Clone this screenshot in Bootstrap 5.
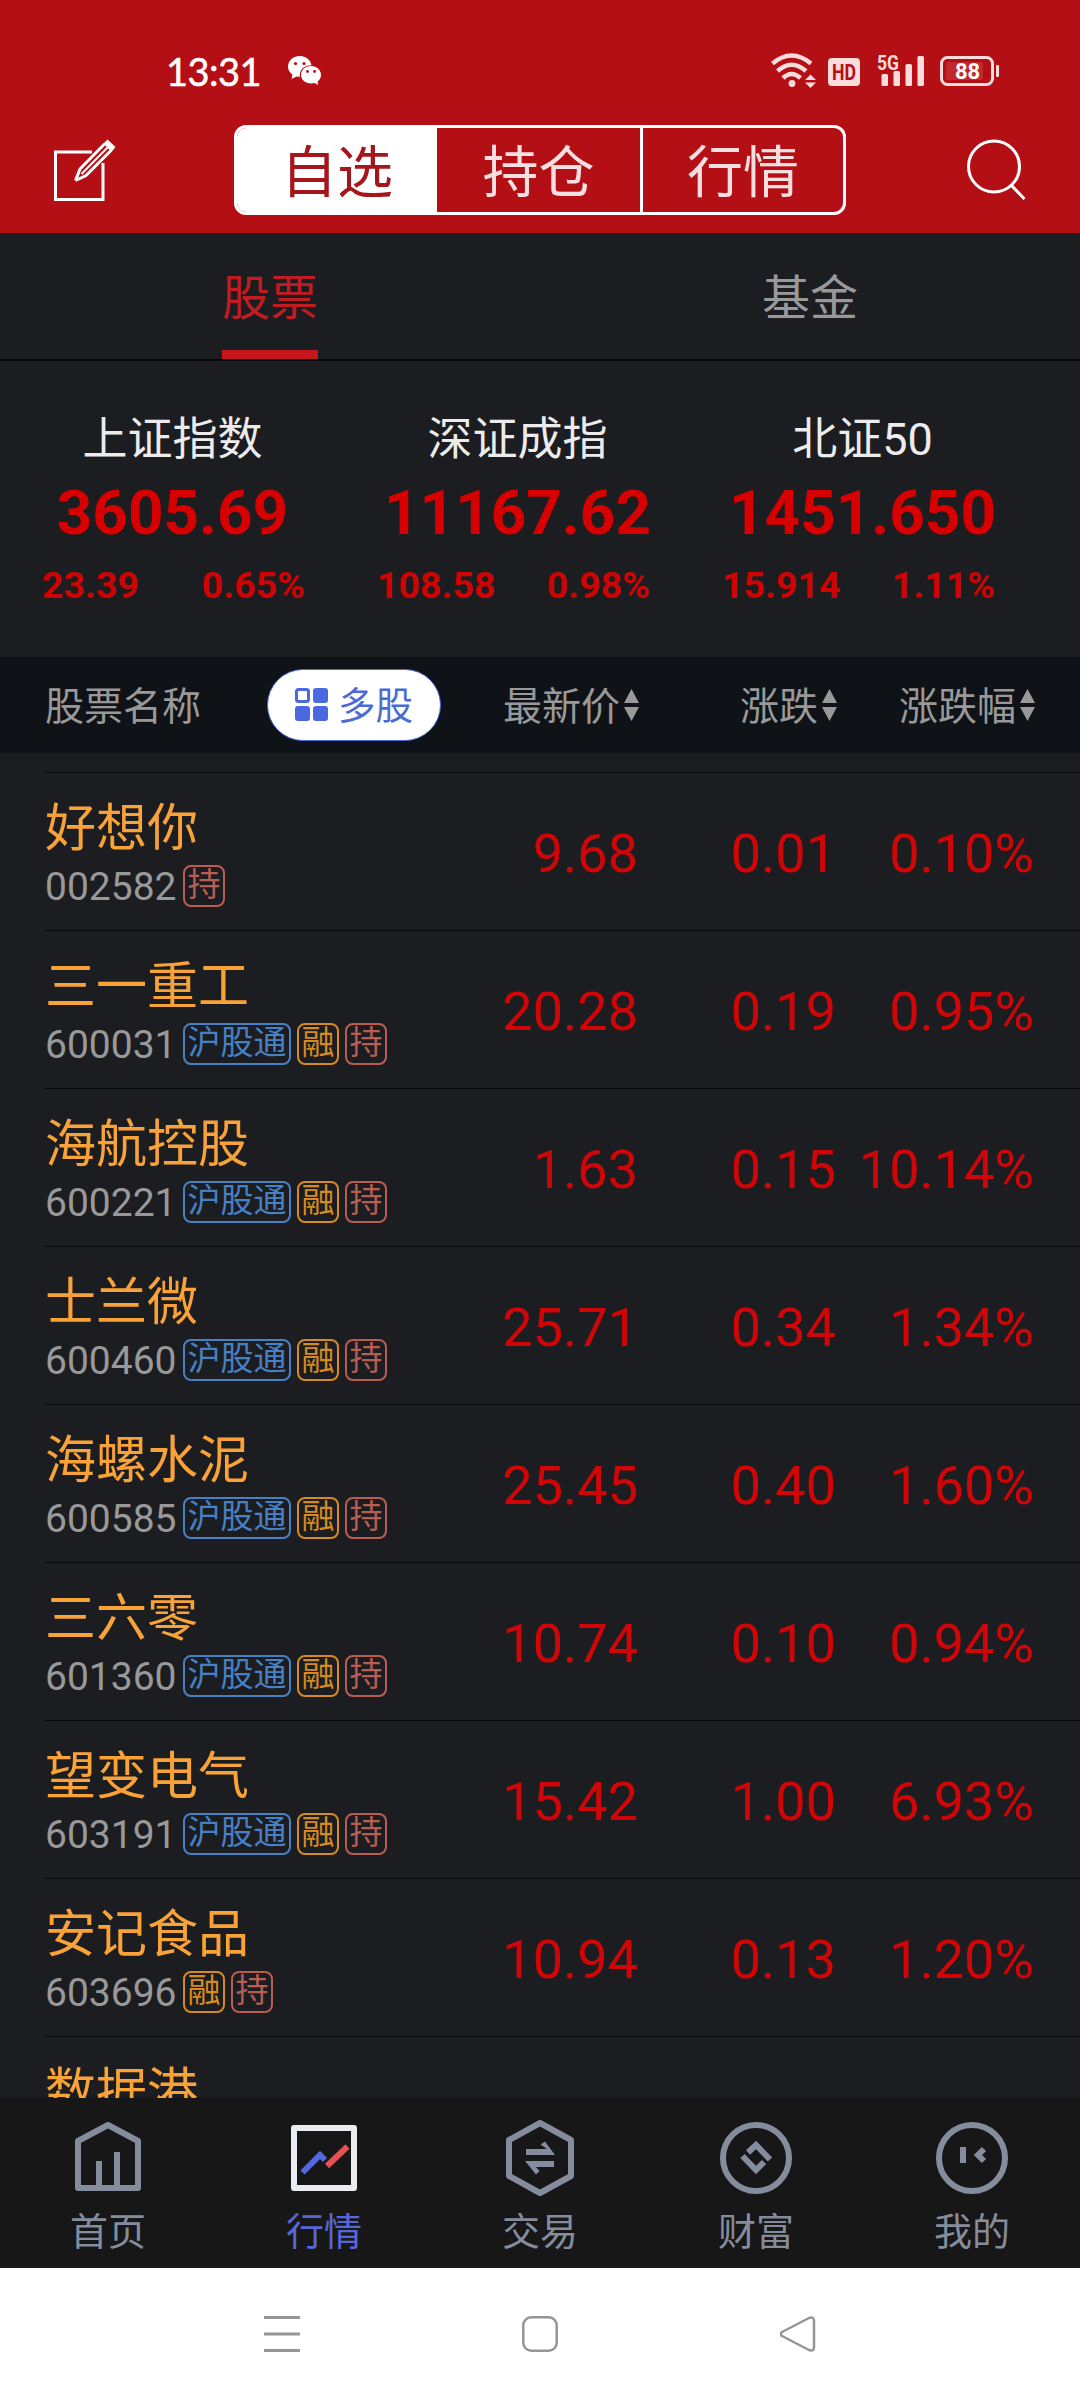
<!DOCTYPE html>
<html lang="zh-CN">
<head>
<meta charset="utf-8">
<meta name="viewport" content="width=device-width, initial-scale=1">
<title>行情</title>
<link href="https://cdn.jsdelivr.net/npm/bootstrap@5.3.0/dist/css/bootstrap.min.css" rel="stylesheet">
<style>
body{width:1080px;height:2400px;overflow:hidden;background:#1c1d21;font-family:Roboto,"Noto Sans CJK SC",sans-serif;color:#999;line-height:1}
svg{display:block;flex:none}
.top-area{background:#b40f15;height:233px}
.status-bar{height:125px;padding:16px 77px 0 166px;color:#fff}
.clock{font:400 38px/1 Lato,sans-serif;-webkit-text-stroke:.5px #fff;width:122px;letter-spacing:-.5px}
.title-bar{padding:0 54px}
.seg-control{width:612px;height:90px;border:3px solid #fff;border-radius:12px;overflow:hidden;margin-left:118px}
.seg-control .btn{font-size:56px;line-height:1;padding:5px 0 0;border:0;border-radius:0;color:#f6dfe0;width:204px}
.seg-control .btn+.btn{border-left:3px solid #fff}
.seg-control .btn.active{background:#fff;color:#a4161c;width:201px;border:0}
.seg-control .btn.active+.btn{border:0}
.tab-strip{height:128px;border-bottom:2px solid #050609}
.tab-strip a{font-size:48px;color:#999;text-decoration:none;height:126px}
.tab-strip a span{display:block;width:96px;height:126px;line-height:131px;border-bottom:9px solid transparent}
.tab-strip a.active span{color:#c01c21;border-color:#c5171b}
.indices{height:296px;padding-top:54px}
.index-col{width:345px}
.index-name{font-size:45px;line-height:50px;color:#ececec}
.index-val{font-size:62px;font-weight:700;line-height:70px;color:#d60000;margin-top:13px}
.index-chg{font-size:37.5px;font-weight:700;line-height:44px;color:#cc0404;padding:0 40px 0 42px;margin-top:15px}
.col-head{height:96px;background:#0f1217;font-size:39px;padding-left:45px}
.head-text{padding-top:4px}
.head-name{width:222px}
.pill{width:174px;height:72px;border-radius:36px;border:1px solid #4a69e0;background:#fff;color:#4c6ad6;font-size:37.5px}
.c-sort{width:198px}
.stocks{height:1345px;padding:19px 0 0 45px;overflow:hidden}
.stock-row{height:158px;border-top:1px solid #050609}
.stock-id{width:395px;padding-top:24px}
.stock-name{font-size:51px;line-height:64px;color:#f9a237;white-space:nowrap}
.stock-code{font-size:39px;line-height:45px;width:138px;color:#999}
.tagbox{height:42px;border:2px solid;border-radius:8px;font-size:33px;line-height:36px;padding:0 2.5px;white-space:nowrap;margin-right:6px}
.tg-b{color:#4681c6;width:108px;text-align:center}.tg-o{color:#d68b20;width:42px}.tg-r{color:#b95d53;width:42px}
.num{font-size:54px;line-height:161px;color:#d00508;text-align:right;width:198px}
.bottom-tabs{height:170px;border-top:2px solid #13161b;background:#171717;font-size:38px;color:#858c9d}
.bottom-tabs a{width:216px;color:inherit;text-decoration:none;padding-top:18px}
.bottom-tabs a.active{color:#5766d8}
.bottom-tabs span{line-height:44px;margin-top:8px}
.sys-nav{height:132px;background:#fff;padding:47px 264px 0}
</style>
<script src="https://cdn.jsdelivr.net/npm/bootstrap@5.3.0/dist/js/bootstrap.bundle.min.js"></script>
</head>
<body>
<svg width="0" height="0" class="position-absolute"><defs>
<symbol id="sort" viewBox="0 0 15 32"><path d="M7.500 0 15 14H0zM0 18h15L7.500 32z" fill="#999"/></symbol>
</defs></svg>
<header class="top-area">
  <div class="status-bar d-flex align-items-center">
    <div class="clock">13:31</div>
    <svg width="33" height="29" viewBox="0 0 33 29"><path d="M12 0C5.200 0 0 4.700 0 10.500c0 3.500 1.800 6.300 4.500 8.200L3.500 23l5-2.600c1.200.3 2.300.4 3.500.4C11 14 16 9 23.500 9.200 22.500 4 18 0 12 0z" fill="#fff"/><path d="M23 10c-5.600 0-10 4-10 8.800s4.400 8.800 10 8.800c1.200 0 2.400-.2 3.500-.5l3.800 1.900-.8-3.200c2.200-1.700 3.500-4.200 3.500-7C33 14 28.600 10 23 10z" fill="#fff"/><g fill="#b40f15"><circle cx="7.500" cy="7.500" r="1.600"/><circle cx="16" cy="7.500" r="1.600"/><circle cx="19.500" cy="15.500" r="1.400"/><circle cx="26.500" cy="15.500" r="1.400"/></g></svg>
    <svg class="ms-auto" width="232" height="40" viewBox="0 0 232 40"><g fill="none" stroke="#fbdcdd" stroke-width="4.500"><path d="M1.500 12.500Q20.500-3.500 40 12.500M6.500 20Q20.500 7.500 35 20M12 27Q20.500 19 29.500 27"/></g><g fill="#fbdcdd"><circle cx="21" cy="32.500" r="3.400"/><path d="M39.500 23.500l5.500 5.500H34zM34 31.500h11l-5.500 5.500z"/><rect x="57" y="7" width="32" height="28" rx="4"/><rect x="110.500" y="23" width="6.500" height="12" rx="1.500"/><rect x="122.500" y="20" width="6.500" height="15" rx="1.500"/><rect x="134.500" y="13" width="6.500" height="22" rx="1.500"/><rect x="146.500" y="5" width="6.500" height="30" rx="1.500"/><rect x="225" y="14" width="3" height="12" rx="1"/></g><rect x="170.500" y="6.500" width="51" height="27" rx="6" fill="none" stroke="#fbdcdd" stroke-width="3"/><rect x="175" y="11" width="37" height="18" rx="2" fill="#c0282d"/><text x="61" y="29" font-family="Roboto" font-weight="700" font-size="22.500" fill="#b40f15" textLength="24" lengthAdjust="spacingAndGlyphs">HD</text><text x="106" y="18.500" font-family="Roboto" font-weight="700" font-size="21" fill="#fbdcdd" textLength="22" lengthAdjust="spacingAndGlyphs">5G</text><text x="196.500" y="28" font-family="Roboto" font-weight="700" font-size="22" text-anchor="middle" fill="#fff">88</text></svg>
  </div>
  <div class="title-bar d-flex align-items-center">
    <svg width="62" height="62" viewBox="0 0 62 62" fill="none" stroke="#fff"><path d="M38 13H1.500v47.500h47.500V24" stroke-width="3"/><path d="M21.500 41.500l4.500-11.500L50.500 5M57 11.500L32 36.500l-10.500 5" stroke-width="3"/><path d="M27.500 35L53.500 8.500" stroke-width="2"/><path d="M49.500 4.500L53.500.5 61.500 8l-4 5z" fill="#fff" stroke="none"/></svg>
    <div class="seg-control d-flex"><button class="btn active">自选</button><button class="btn">持仓</button><button class="btn">行情</button></div>
    <svg class="ms-auto" width="60" height="62" viewBox="0 0 60 62" fill="none" stroke="#fff" stroke-width="3"><circle cx="28" cy="27.500" r="25.500"/><path d="M45 46l13.500 14"/></svg>
  </div>
</header>
<nav class="tab-strip d-flex">
  <a href="#" class="active w-50 d-flex justify-content-center"><span>股票</span></a>
  <a href="#" class="w-50 d-flex justify-content-center"><span>基金</span></a>
</nav>
<section class="indices d-flex text-center">
  <div class="index-col"><div class="index-name">上证指数</div><div class="index-val">3605.69</div><div class="index-chg d-flex justify-content-between"><span>23.39</span><span>0.65%</span></div></div>
  <div class="index-col"><div class="index-name">深证成指</div><div class="index-val">11167.62</div><div class="index-chg d-flex justify-content-between" style="padding-left:32px"><span>108.58</span><span>0.98%</span></div></div>
  <div class="index-col"><div class="index-name">北证50</div><div class="index-val">1451.650</div><div class="index-chg d-flex justify-content-between" style="padding-left:32px"><span>15.914</span><span>1.11%</span></div></div>
</section>
<div class="col-head d-flex align-items-center">
  <div class="head-name head-text">股票名称</div>
  <div class="pill d-flex align-items-center justify-content-center"><svg width="35" height="34" viewBox="0 0 35 34"><rect x="1.500" y="1.500" width="12" height="12" rx="2" fill="none" stroke="#4a69e0" stroke-width="3"/><g fill="#4a69e0"><rect x="18" width="15" height="15" rx="3"/><rect y="18" width="15" height="15" rx="3"/><rect x="18" y="18" width="15" height="15" rx="3"/></g></svg><span class="head-text ps-1 ms-1">多股</span></div>
  <div class="c-sort d-flex justify-content-end align-items-center"><span class="head-text">最新价</span><svg class="ms-1" width="15" height="32"><use href="#sort"/></svg></div>
  <div class="c-sort d-flex justify-content-end align-items-center"><span class="head-text">涨跌</span><svg class="ms-1" width="15" height="32"><use href="#sort"/></svg></div>
  <div class="c-sort d-flex justify-content-end align-items-center"><span class="head-text">涨跌幅</span><svg class="ms-1" width="15" height="32"><use href="#sort"/></svg></div>
</div>
<main class="stocks" id="stocks"></main>
<nav class="bottom-tabs d-flex text-center">
  <a href="#" class="d-flex flex-column align-items-center"><svg width="80" height="84" viewBox="0 0 80 84" fill="none" stroke="#858c9d" stroke-width="6" stroke-linejoin="round"><path d="M10 70V23L40 7l30 16v47zM31 70V43M49 70V34"/></svg><span>首页</span></a>
  <a href="#" class="active d-flex flex-column align-items-center"><svg width="80" height="84" viewBox="0 0 80 84" fill="none"><rect x="10" y="10" width="60" height="60" stroke="#ebecf0" stroke-width="6" stroke-linejoin="round"/><path d="M18.500 54.500L36 37l5 5" stroke="#5468de" stroke-width="6"/><path d="M43 48L63.500 28.500" stroke="#e75055" stroke-width="6"/></svg><span>行情</span></a>
  <a href="#" class="d-flex flex-column align-items-center"><svg width="80" height="84" viewBox="0 0 80 84" fill="none" stroke="#858c9d" stroke-width="6" stroke-linejoin="round"><path d="M40 5l31 17v36L40 75 9 58V22z"/><path d="M26 31H47L40.500 26.500 45 23.500 55 37H26zM54 43H25L36 56.500 39.500 53 36 49H54z" fill="#858c9d" stroke="none"/></svg><span>交易</span></a>
  <a href="#" class="d-flex flex-column align-items-center"><svg width="80" height="84" viewBox="0 0 80 84" fill="none" stroke="#858c9d" stroke-width="6"><circle cx="40" cy="40" r="33"/><path d="M32 34.500L40 27l14 14.500M26.500 38L40 52l8-8"/></svg><span>财富</span></a>
  <a href="#" class="d-flex flex-column align-items-center"><svg width="80" height="84" viewBox="0 0 80 84" fill="none" stroke="#858c9d" stroke-width="6"><circle cx="40" cy="40" r="33"/><path d="M31 29v16M52 31l-6 6 6 6"/></svg><span>我的</span></a>
</nav>
<div class="sys-nav d-flex justify-content-between">
  <svg width="36" height="38" viewBox="0 0 36 38" stroke="#969696" stroke-width="3"><path d="M0 2.500h36M0 19h36M0 35.500h36"/></svg>
  <svg width="36" height="38" viewBox="0 0 36 38" fill="none" stroke="#969696" stroke-width="2.500"><rect x="1.300" y="2.300" width="33.400" height="33.400" rx="8"/></svg>
  <svg width="36" height="38" viewBox="0 0 36 38" fill="none" stroke="#969696" stroke-width="2.500" stroke-linejoin="round"><path d="M2 17L29 3Q34 1 34 6V32Q34 37 29 35L2 21Q-.5 19 2 17z"/></svg>
</div>
<script>
const rows=[["好想你","002582","r","9.68","0.01","0.10%"],["三一重工","600031","bor","20.28","0.19","0.95%"],["海航控股","600221","bor","1.63","0.15","10.14%"],["士兰微","600460","bor","25.71","0.34","1.34%"],["海螺水泥","600585","bor","25.45","0.40","1.60%"],["三六零","601360","bor","10.74","0.10","0.94%"],["望变电气","603191","bor","15.42","1.00","6.93%"],["安记食品","603696","or","10.94","0.13","1.20%"],["数据港","","","","",""]];
const tags={b:"沪股通",o:"融",r:"持"};
document.getElementById("stocks").innerHTML=rows.map(r=>`<div class="stock-row d-flex"><div class="stock-id"><div class="stock-name">${r[0]}</div><div class="d-flex mt-1"><span class="stock-code">${r[1]}</span>${[...r[2]].map(t=>`<span class="tagbox tg-${t}">${tags[t]}</span>`).join("")}</div></div><div class="num">${r[3]}</div><div class="num">${r[4]}</div><div class="num">${r[5]}</div></div>`).join("");
</script>
</body>
</html>
